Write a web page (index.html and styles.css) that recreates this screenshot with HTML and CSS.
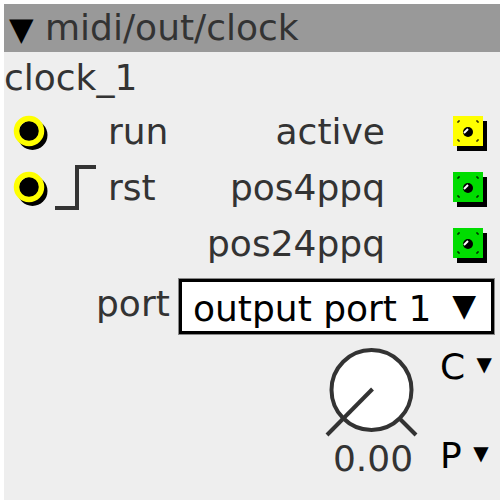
FILE: index.html
```html
<!DOCTYPE html>
<html lang="en">
<head>
    <meta charset="UTF-8">
    <title>midi/out/clock</title>
    <link rel="stylesheet" href="styles.css">
</head>
<body>
    <div class="object">
        <div class="title"><span class="collapse">▼</span> midi/out/clock</div>
        <div class="instance">clock_1</div>

        <div class="io-row">
            <svg class="inlet" width="40" height="40" viewBox="0 0 40 40">
                <circle cx="22.5" cy="24" r="15" fill="#000"/>
                <circle cx="19" cy="20" r="12.5" fill="none" stroke="#ff0" stroke-width="5.5"/>
            </svg>
            <span class="pulse"></span>
            <span class="in-label">run</span>
            <span class="out-label">active</span>
            <svg class="outlet" width="40" height="40" viewBox="0 0 40 40">
                <rect x="6" y="10" width="30" height="30" fill="#000"/>
                <rect x="2" y="5" width="30" height="30" fill="#ff0"/>
                <path d="M7 12V10H9 M25 10H27V12 M27 28V30H25 M9 30H7V28" fill="none" stroke="#000" stroke-width="1"/>
                <circle cx="17" cy="21" r="5" fill="#000"/>
                <path d="M13 22L17 18" stroke="#fff" stroke-width="2"/>
            </svg>
        </div>

        <div class="io-row">
            <svg class="inlet" width="40" height="40" viewBox="0 0 40 40">
                <circle cx="22.5" cy="24" r="15" fill="#000"/>
                <circle cx="19" cy="20" r="12.5" fill="none" stroke="#ff0" stroke-width="5.5"/>
            </svg>
            <svg class="pulse" width="56" height="50" viewBox="0 0 56 50">
                <path d="M7 46H29V5H48" fill="none" stroke="#333" stroke-width="4"/>
            </svg>
            <span class="in-label">rst</span>
            <span class="out-label">pos4ppq</span>
            <svg class="outlet" width="40" height="40" viewBox="0 0 40 40">
                <rect x="6" y="10" width="30" height="30" fill="#000"/>
                <rect x="2" y="5" width="30" height="30" fill="#0d0"/>
                <path d="M7 12V10H9 M25 10H27V12 M27 28V30H25 M9 30H7V28" fill="none" stroke="#000" stroke-width="1"/>
                <circle cx="17" cy="21" r="5" fill="#000"/>
                <path d="M13 22L17 18" stroke="#fff" stroke-width="2"/>
            </svg>
        </div>

        <div class="io-row">
            <span class="inlet"></span>
            <span class="pulse"></span>
            <span class="in-label"></span>
            <span class="out-label">pos24ppq</span>
            <svg class="outlet" width="40" height="40" viewBox="0 0 40 40">
                <rect x="6" y="10" width="30" height="30" fill="#000"/>
                <rect x="2" y="5" width="30" height="30" fill="#0d0"/>
                <path d="M7 12V10H9 M25 10H27V12 M27 28V30H25 M9 30H7V28" fill="none" stroke="#000" stroke-width="1"/>
                <circle cx="17" cy="21" r="5" fill="#000"/>
                <path d="M13 22L17 18" stroke="#fff" stroke-width="2"/>
            </svg>
        </div>

        <div class="param-row">
            <span class="param-label">port</span>
            <div class="dropdown">
                <span>output port 1</span>
                <span class="arrow">▼</span>
            </div>
        </div>

        <div class="knob-row">
            <div class="knob">
                <svg width="100" height="100" viewBox="0 0 100 100">
                    <circle cx="48.5" cy="48" r="40" fill="#fff" stroke="#333" stroke-width="4"/>
                    <path d="M49.5 47L4 93" stroke="#333" stroke-width="4"/>
                    <path d="M77 77L93 93" stroke="#333" stroke-width="4"/>
                </svg>
                <div class="value">0.00</div>
            </div>
            <div class="modes">
                <span>C <small>▼</small></span>
                <span>P <small>▼</small></span>
            </div>
        </div>
    </div>
</body>
</html>
```

FILE: styles.css
```css
body {
    margin: 4px;
    background: #fff;
    font-family: 'DejaVu Sans', sans-serif;
    font-size: 36px;
    color: #333;
}
.object {
    width: 496px;
    height: 496px;
    background: #eee;
    display: flex;
    flex-direction: column;
}
.title {
    height: 48px;
    line-height: 48px;
    background: #999;
    padding-left: 5px;
    white-space: nowrap;
}
.collapse {
    color: #000;
    font-size: 32px;
}
.instance {
    height: 51px;
    line-height: 51px;
}
.io-row {
    height: 56px;
    display: flex;
    align-items: center;
}
.inlet {
    width: 40px;
    height: 40px;
    margin-left: 6px;
}
.pulse {
    width: 56px;
    height: 50px;
    margin-left: -2px;
}
.in-label {
    flex: 1;
    margin-left: 4px;
}
.out-label {
    text-align: right;
}
.outlet {
    margin-left: 66px;
    margin-right: 9px;
}
.param-row {
    display: flex;
    align-items: flex-end;
    margin-top: 8px;
}
.param-label {
    margin-left: 92px;
    width: 83px;
    padding-bottom: 10px;
}
.dropdown {
    width: 283px;
    height: 49px;
    border: 3px solid #000;
    box-shadow: 0 0 0 1px #888;
    background: #fff;
    color: #000;
    display: flex;
    justify-content: space-between;
    align-items: flex-end;
    padding: 0 15px 0 11px;
    line-height: 44px;
}
.arrow {
    font-size: 31px;
    line-height: 52px;
}
.knob-row {
    display: flex;
    justify-content: flex-end;
    margin-top: 8px;
}
.knob {
    display: flex;
    flex-direction: column;
    align-items: center;
    margin-right: 17px;
}
.value {
    margin-top: -3px;
    line-height: 40px;
}
.modes {
    display: flex;
    flex-direction: column;
    justify-content: space-between;
    color: #000;
    width: 60px;
    height: 130px;
    margin-top: 4px;
}
.modes small {
    font-size: 20px;
    vertical-align: 8px;
}
```
